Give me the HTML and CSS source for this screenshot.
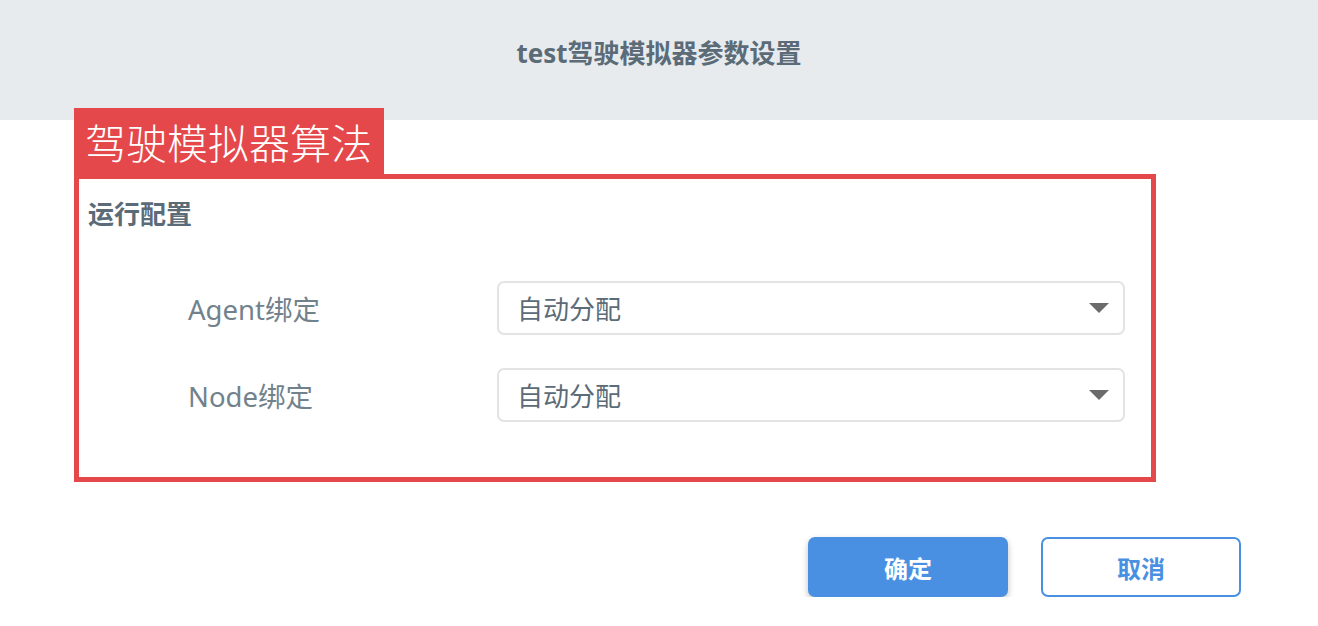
FILE: index.html
```html
<!DOCTYPE html>
<html lang="zh-CN">
<head>
    <meta charset="UTF-8">
    <meta name="viewport" content="width=device-width, initial-scale=1.0">
    <title>test驾驶模拟器参数设置</title>
    <link rel="stylesheet" href="styles.css">
</head>
<body>
    <div class="dialog-header">test驾驶模拟器参数设置</div>

    <div class="dialog-body">
        <div class="algo-tag">驾驶模拟器算法</div>
        <div class="config-box">
            <h2>运行配置</h2>
            <div class="form-rows">
                <div class="form-row">
                    <label>Agent绑定</label>
                    <div class="fake-select">
                        <span>自动分配</span>
                        <svg width="20" height="10" viewBox="0 0 20 10"><path d="M0 0 L20 0 L10 10 Z" fill="#6b6b6b"/></svg>
                    </div>
                </div>
                <div class="form-row">
                    <label>Node绑定</label>
                    <div class="fake-select">
                        <span>自动分配</span>
                        <svg width="20" height="10" viewBox="0 0 20 10"><path d="M0 0 L20 0 L10 10 Z" fill="#6b6b6b"/></svg>
                    </div>
                </div>
            </div>
        </div>

        <div class="actions">
            <button class="btn btn-primary">确定</button>
            <button class="btn btn-outline">取消</button>
        </div>
    </div>
</body>
</html>
```

FILE: styles.css
```css
body {
    margin: 0;
    font-family: "Noto Sans", "Noto Sans CJK SC", sans-serif;
    background-color: white;
}
.dialog-header {
    height: 120px;
    background-color: #e8ebee;
    display: flex;
    align-items: center;
    justify-content: center;
    font-size: 26px;
    font-weight: bold;
    color: #5b6b77;
    padding-bottom: 16px;
    box-sizing: border-box;
}
.dialog-body {
    padding-left: 74px;
}
.algo-tag {
    display: inline-block;
    margin-top: -12px;
    height: 66px;
    line-height: 66px;
    padding: 0 12px 0 11px;
    background-color: #e5484b;
    color: white;
    font-size: 41px;
    font-weight: 300;
    font-family: "Noto Sans CJK SC", sans-serif;
    vertical-align: top;
}
.config-box {
    width: 1082px;
    height: 308px;
    box-sizing: border-box;
    border: 5px solid #e5484b;
    padding: 18px 9px 0;
}
.config-box h2 {
    margin: 0;
    font-size: 26px;
    line-height: 34px;
    font-weight: bold;
    color: #5b6b77;
}
.form-rows {
    margin-top: 50px;
    padding-left: 100px;
    display: flex;
    flex-direction: column;
    gap: 33px;
}
.form-row {
    display: flex;
    align-items: center;
}
.form-row label {
    width: 309px;
    font-size: 27.5px;
    color: #72828d;
}
.fake-select {
    width: 628px;
    height: 54px;
    box-sizing: border-box;
    border: 2px solid #e3e3e3;
    border-radius: 7px;
    display: flex;
    align-items: center;
    justify-content: space-between;
    padding: 0 14px 0 18px;
    font-size: 26px;
    color: #5b6b77;
}
.actions {
    display: flex;
    justify-content: flex-end;
    gap: 33px;
    margin-top: 55px;
    padding-right: 77px;
}
.btn {
    width: 200px;
    height: 60px;
    border-radius: 7px;
    font-family: "Noto Sans", "Noto Sans CJK SC", sans-serif;
    font-size: 24px;
    font-weight: bold;
    cursor: pointer;
}
.btn-primary {
    background-color: #4a90e2;
    color: white;
    border: none;
    box-shadow: 0 3px 6px rgba(0, 0, 0, 0.25);
}
.btn-outline {
    background-color: white;
    color: #4a90e2;
    border: 2px solid #4a90e2;
}
```
